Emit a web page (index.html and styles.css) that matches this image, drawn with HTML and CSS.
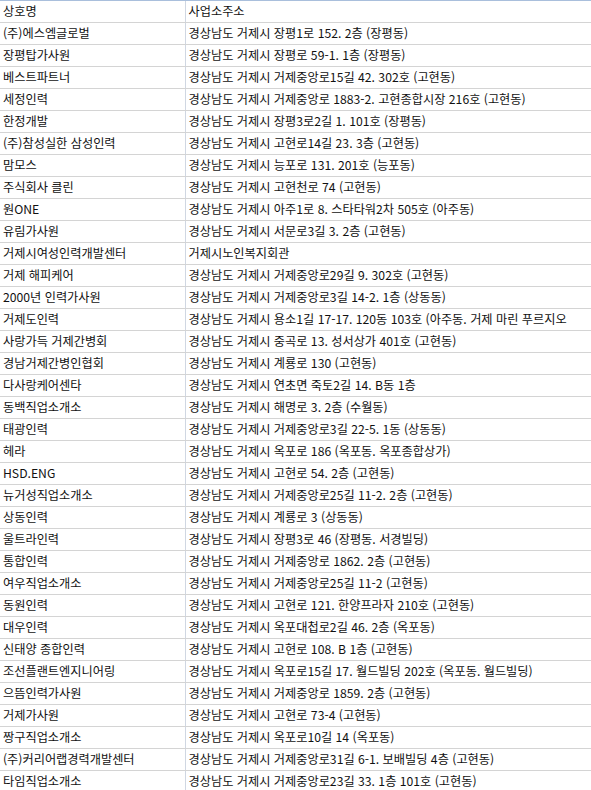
FILE: index.html
```html
<!DOCTYPE html>
<html lang="ko">
<head>
<meta charset="utf-8">
<link rel="stylesheet" href="styles.css">
</head>
<body>
<table class="sheet">
<colgroup><col class="c-name"><col class="c-addr"></colgroup>
<thead>
<tr><th>상호명</th><th>사업소주소</th></tr>
</thead>
<tbody>
<tr><td>(주)에스엠글로벌</td><td>경상남도 거제시 장평1로 152. 2층 (장평동)</td></tr>
<tr><td>장평탑가사원</td><td>경상남도 거제시 장평로 59-1. 1층 (장평동)</td></tr>
<tr><td>베스트파트너</td><td>경상남도 거제시 거제중앙로15길 42. 302호 (고현동)</td></tr>
<tr><td>세정인력</td><td>경상남도 거제시 거제중앙로 1883-2. 고현종합시장 216호 (고현동)</td></tr>
<tr><td>한정개발</td><td>경상남도 거제시 장평3로2길 1. 101호 (장평동)</td></tr>
<tr><td>(주)참성실한 삼성인력</td><td>경상남도 거제시 고현로14길 23. 3층 (고현동)</td></tr>
<tr><td>맘모스</td><td>경상남도 거제시 능포로 131. 201호 (능포동)</td></tr>
<tr><td>주식회사 클린</td><td>경상남도 거제시 고현천로 74 (고현동)</td></tr>
<tr><td>원ONE</td><td>경상남도 거제시 아주1로 8. 스타타워2차 505호 (아주동)</td></tr>
<tr><td>유림가사원</td><td>경상남도 거제시 서문로3길 3. 2층 (고현동)</td></tr>
<tr><td>거제시여성인력개발센터</td><td>거제시노인복지회관</td></tr>
<tr><td>거제 해피케어</td><td>경상남도 거제시 거제중앙로29길 9. 302호 (고현동)</td></tr>
<tr><td>2000년 인력가사원</td><td>경상남도 거제시 거제중앙로3길 14-2. 1층 (상동동)</td></tr>
<tr><td>거제도인력</td><td>경상남도 거제시 용소1길 17-17. 120동 103호 (아주동. 거제 마린 푸르지오</td></tr>
<tr><td>사랑가득 거제간병회</td><td>경상남도 거제시 중곡로 13. 성서상가 401호 (고현동)</td></tr>
<tr><td>경남거제간병인협회</td><td>경상남도 거제시 계룡로 130 (고현동)</td></tr>
<tr><td>다사랑케어센타</td><td>경상남도 거제시 연초면 죽토2길 14. B동 1층</td></tr>
<tr><td>동백직업소개소</td><td>경상남도 거제시 해명로 3. 2층 (수월동)</td></tr>
<tr><td>태광인력</td><td>경상남도 거제시 거제중앙로3길 22-5. 1동 (상동동)</td></tr>
<tr><td>헤라</td><td>경상남도 거제시 옥포로 186 (옥포동. 옥포종합상가)</td></tr>
<tr><td>HSD.ENG</td><td>경상남도 거제시 고현로 54. 2층 (고현동)</td></tr>
<tr><td>뉴거성직업소개소</td><td>경상남도 거제시 거제중앙로25길 11-2. 2층 (고현동)</td></tr>
<tr><td>상동인력</td><td>경상남도 거제시 계룡로 3 (상동동)</td></tr>
<tr><td>울트라인력</td><td>경상남도 거제시 장평3로 46 (장평동. 서경빌딩)</td></tr>
<tr><td>통합인력</td><td>경상남도 거제시 거제중앙로 1862. 2층 (고현동)</td></tr>
<tr><td>여우직업소개소</td><td>경상남도 거제시 거제중앙로25길 11-2 (고현동)</td></tr>
<tr><td>동원인력</td><td>경상남도 거제시 고현로 121. 한양프라자 210호 (고현동)</td></tr>
<tr><td>대우인력</td><td>경상남도 거제시 옥포대첩로2길 46. 2층 (옥포동)</td></tr>
<tr><td>신태양 종합인력</td><td>경상남도 거제시 고현로 108. B 1층 (고현동)</td></tr>
<tr><td>조선플랜트엔지니어링</td><td>경상남도 거제시 옥포로15길 17. 월드빌딩 202호 (옥포동. 월드빌딩)</td></tr>
<tr><td>으뜸인력가사원</td><td>경상남도 거제시 거제중앙로 1859. 2층 (고현동)</td></tr>
<tr><td>거제가사원</td><td>경상남도 거제시 고현로 73-4 (고현동)</td></tr>
<tr><td>짱구직업소개소</td><td>경상남도 거제시 옥포로10길 14 (옥포동)</td></tr>
<tr><td>(주)커리어랩경력개발센터</td><td>경상남도 거제시 거제중앙로31길 6-1. 보배빌딩 4층 (고현동)</td></tr>
<tr><td>타임직업소개소</td><td>경상남도 거제시 거제중앙로23길 33. 1층 101호 (고현동)</td></tr>
</tbody>
</table>
</body>
</html>
```

FILE: styles.css
```css
html, body {
  margin: 0;
  padding: 0;
  background: #ffffff;
  overflow: hidden;
}
body {
  width: 591px;
  height: 790px;
  border-top: 1px solid #a9bfdc;
  box-sizing: border-box;
}
.sheet {
  border-collapse: collapse;
  table-layout: fixed;
  width: 591px;
  font-family: "Noto Sans CJK KR", "Noto Sans", sans-serif;
  font-size: 12.2px;
  color: #111111;
}
.c-name { width: 185px; }
.c-addr { width: 406px; }
.sheet th,
.sheet td {
  height: 21px;
  padding: 0 0 0 3px;
  text-align: left;
  font-weight: normal;
  white-space: nowrap;
  overflow: hidden;
  line-height: 21px;
  border-bottom: 1px solid #d4d4d4;
  border-right: 1px solid #d0d7e2;
}
.sheet th:last-child,
.sheet td:last-child {
  border-right: none;
}
```
